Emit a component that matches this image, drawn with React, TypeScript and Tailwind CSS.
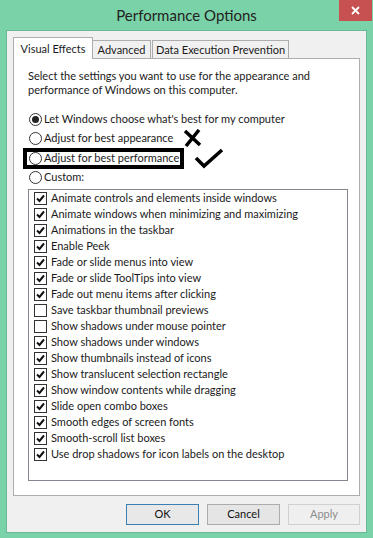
import React from "react";

const effects: { label: string; on: boolean }[] = [
  { label: "Animate controls and elements inside windows", on: true },
  { label: "Animate windows when minimizing and maximizing", on: true },
  { label: "Animations in the taskbar", on: true },
  { label: "Enable Peek", on: true },
  { label: "Fade or slide menus into view", on: true },
  { label: "Fade or slide ToolTips into view", on: true },
  { label: "Fade out menu items after clicking", on: true },
  { label: "Save taskbar thumbnail previews", on: false },
  { label: "Show shadows under mouse pointer", on: false },
  { label: "Show shadows under windows", on: true },
  { label: "Show thumbnails instead of icons", on: true },
  { label: "Show translucent selection rectangle", on: true },
  { label: "Show window contents while dragging", on: true },
  { label: "Slide open combo boxes", on: true },
  { label: "Smooth edges of screen fonts", on: true },
  { label: "Smooth-scroll list boxes", on: true },
  { label: "Use drop shadows for icon labels on the desktop", on: true },
];

const radios = [
  "Let Windows choose what's best for my computer",
  "Adjust for best appearance",
  "Adjust for best performance",
  "Custom:",
];

function Radio({ checked }: { checked: boolean }) {
  return (
    <span className="flex h-[13px] w-[13px] shrink-0 items-center justify-center rounded-full border border-[#333] bg-white">
      {checked && <span className="h-[7px] w-[7px] rounded-full bg-[#222]" />}
    </span>
  );
}

function Check({ on }: { on: boolean }) {
  return (
    <span className="flex h-[13px] w-[13px] shrink-0 items-center justify-center border border-[#333] bg-white">
      {on && (
        <svg width="9" height="9" viewBox="0 0 9 9">
          <path d="M1 4.5 L3.5 7 L8 1.5" fill="none" stroke="#111" strokeWidth="2" />
        </svg>
      )}
    </span>
  );
}

export default function App() {
  return (
    <div className="flex h-[538px] w-[373px] flex-col bg-[#7ad2a8] font-['Lato',sans-serif] text-[11px] text-[#1a1a1a]">
      {/* title bar */}
      <div className="relative flex h-[30px] shrink-0 items-center justify-center">
        <span className="pt-[1px] text-[15px] text-[#222]">Performance Options</span>
        <div className="absolute right-[1px] top-0 flex h-[21px] w-[33px] items-center justify-center bg-[#c75050]">
          <svg width="9" height="9" viewBox="0 0 9 9">
            <path d="M1 1 L8 8 M8 1 L1 8" stroke="#fff" strokeWidth="1.8" />
          </svg>
        </div>
      </div>

      <div className="mx-[6px] mb-[5px] flex flex-1 flex-col border border-[#6ab896] bg-[#f0f0f0] px-[6px] pt-[6px]">
        {/* tabs */}
        <div className="flex h-[21px] items-end">
          <div className="z-10 -mb-px flex h-[22px] w-[80px] items-center justify-center border border-b-0 border-[#adadad] bg-white leading-none">
            Visual Effects
          </div>
          <div className="flex h-[18px] w-[58px] items-center justify-center border border-b-0 border-l-0 border-[#adadad] bg-[#f0f0f0] leading-none">
            Advanced
          </div>
          <div className="ml-[1px] flex h-[18px] w-[137px] items-center justify-center border border-b-0 border-[#adadad] bg-[#f0f0f0] leading-none">
            Data Execution Prevention
          </div>
        </div>

        {/* panel */}
        <div className="relative h-[438px] border border-[#adadad] bg-white pl-[14px] pr-[12px] pt-[10px]">
          <p className="leading-[14px]">
            Select the settings you want to use for the appearance and performance of Windows on this computer.
          </p>

          <div className="mt-[14px] flex flex-col gap-[3.5px]">
            {radios.map((r, i) => (
              <div key={r} className="flex h-[16px] items-center gap-[2px] pl-[1px]">
                <Radio checked={i === 0} />
                <span>{r}</span>
              </div>
            ))}
          </div>

          {/* annotation marks */}
          <div className="absolute left-[9px] top-[89px] h-[21px] w-[161px] border-[4px] border-black" />
          <svg className="absolute left-[169px] top-[70px]" width="19" height="18" viewBox="0 0 19 18">
            <path d="M2 2 L17 16 M16 1 L3 17" stroke="#000" strokeWidth="3.5" />
          </svg>
          <svg className="absolute left-[180px] top-[88px]" width="30" height="22" viewBox="0 0 30 22">
            <path d="M2 11 L10 19 L28 3" fill="none" stroke="#000" strokeWidth="3.5" />
          </svg>

          {/* list of effects */}
          <div className="mt-[3px] h-[292px] w-[320px] border border-[#828790] bg-white pl-[5px] pt-[1px]">
            {effects.map((e) => (
              <div key={e.label} className="flex h-[16px] items-center gap-[4px]">
                <Check on={e.on} />
                <span>{e.label}</span>
              </div>
            ))}
          </div>
        </div>

        {/* buttons */}
        <div className="mt-[8px] flex justify-end gap-[8px]">
          <button className="h-[21px] w-[73px] border border-[#3c7fb1] bg-[#e8e8e8] text-[#111]">OK</button>
          <button className="h-[21px] w-[73px] border border-[#acacac] bg-[#e5e5e5] text-[#111]">Cancel</button>
          <button className="h-[21px] w-[72px] border border-[#d0d0d0] bg-[#efefef] text-[#8c8c8c]">Apply</button>
        </div>
      </div>
    </div>
  );
}
